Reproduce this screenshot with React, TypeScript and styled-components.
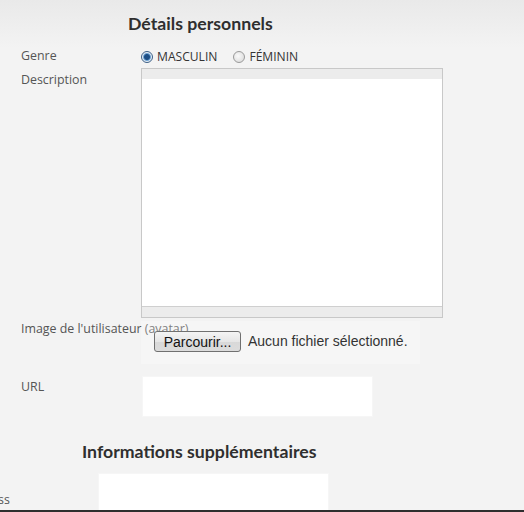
import styled, { createGlobalStyle } from 'styled-components'

const GlobalStyle = createGlobalStyle`
  html, body {
    margin: 0;
    padding: 0;
    background: #f3f3f3;
  }
  body {
    font-family: 'Open Sans', 'Liberation Sans', sans-serif;
  }
`

const Page = styled.div`
  height: 510px;
  overflow: hidden;
  background: linear-gradient(#e9e9e9 0px, #f3f3f3 48px, #f3f3f3 100%);
  border-bottom: 2px solid #2e2e2e;
`

const Section = styled.section<{ $shift?: number }>`
  margin-left: ${(p) => p.$shift ?? 0}px;
`

const Heading = styled.h2<{ $indent: number; $top: number }>`
  margin: ${(p) => p.$top}px 0 0 ${(p) => p.$indent}px;
  font-family: Lato, 'Open Sans', sans-serif;
  font-weight: 700;
  font-size: 17.7px;
  line-height: 22px;
  color: #2f2f2f;
`

const Row = styled.div<{ $top?: number }>`
  display: flex;
  align-items: flex-start;
  margin-top: ${(p) => p.$top ?? 0}px;
`

const Label = styled.label<{ $pad?: number; $top?: number; $inset?: number }>`
  flex: 0 0 auto;
  box-sizing: border-box;
  width: 141px;
  padding-left: ${(p) => p.$inset ?? 21}px;
  padding-top: ${(p) => p.$top ?? 0}px;
  margin-right: ${(p) => p.$pad ?? 0}px;
  font-size: 12.4px;
  line-height: 16px;
  color: #555;
  white-space: nowrap;
`

const Radios = styled.div`
  display: flex;
  align-items: center;
  gap: 16px;
  padding-top: 1px;
`

const RadioOption = styled.span`
  display: inline-flex;
  align-items: center;
  gap: 4px;
  font-size: 12.1px;
  line-height: 16px;
  color: #333;
`

const RadioDot = styled.span<{ $checked?: boolean }>`
  box-sizing: border-box;
  width: 12px;
  height: 12px;
  border-radius: 50%;
  border: 1px solid ${(p) => (p.$checked ? '#3c5f86' : '#9a9a9a')};
  background: ${(p) =>
    p.$checked
      ? 'radial-gradient(circle, #1d4f86 0 2.5px, #6fa3d3 3.5px, #e9f0f7 4.5px)'
      : 'radial-gradient(circle at 40% 40%, #fafafa 0, #d6d6d6 100%)'};
`

const Editor = styled.div`
  box-sizing: border-box;
  width: 302px;
  height: 250px;
  border: 1px solid #c8c8c8;
  display: flex;
  flex-direction: column;
  background: #fff;
`

const EditorBar = styled.div<{ $bottom?: boolean }>`
  height: 10px;
  background: #ececec;
  ${(p) => (p.$bottom ? 'border-top: 1px solid #cfcfcf;' : '')}
`

const EditorArea = styled.textarea`
  flex: 1;
  border: none;
  resize: none;
  outline: none;
  background: #fff;
`

const FileBox = styled.div`
  box-sizing: border-box;
  width: 279px;
  height: 43px;
  padding: 10px 0 0 13px;
  display: flex;
  align-items: flex-start;
  gap: 7px;
  background: rgba(255, 255, 255, 0.25);
  font-family: 'Liberation Sans', Arial, sans-serif;
  font-size: 14px;
  line-height: 21px;
  color: #333;
`

const Browse = styled.button`
  box-sizing: border-box;
  height: 21px;
  width: 87px;
  padding: 0;
  border: 1px solid #707070;
  border-radius: 3px;
  background: linear-gradient(#f4f4f4, #e6e6e6 50%, #d8d8d8 51%, #dcdcdc);
  font-family: 'Liberation Sans', Arial, sans-serif;
  font-size: 14px;
  color: #111;
`

const TextBox = styled.input<{ $w: number; $h: number }>`
  box-sizing: border-box;
  width: ${(p) => p.$w}px;
  height: ${(p) => p.$h}px;
  border: 1px solid #f6f6f6;
  background: #fff;
  outline: none;
`

export default function App() {
  return (
    <>
      <GlobalStyle />
      <Page>
        <Section>
          <Heading $indent={128} $top={13}>
            Détails personnels
          </Heading>
          <Row $top={13}>
            <Label>Genre</Label>
            <Radios>
              <RadioOption>
                <RadioDot $checked />
                MASCULIN
              </RadioOption>
              <RadioOption>
                <RadioDot />
                FÉMININ
              </RadioOption>
            </Radios>
          </Row>
          <Row $top={3}>
            <Label $top={4}>Description</Label>
            <Editor>
              <EditorBar />
              <EditorArea />
              <EditorBar $bottom />
            </Editor>
          </Row>
          <Row $top={3}>
            <Label>Image de l'utilisateur (avatar)</Label>
            <FileBox>
              <Browse>Parcourir...</Browse>
              <span>Aucun fichier sélectionné.</span>
            </FileBox>
          </Row>
          <Row $top={12}>
            <Label $top={3} $pad={1}>
              URL
            </Label>
            <TextBox $w={231} $h={41} />
          </Row>
        </Section>
        <Section $shift={-43}>
          <Heading $indent={125} $top={24}>
            Informations supplémentaires
          </Heading>
          <Row $top={10}>
            <Label $inset={6} $top={19}>
              Address
            </Label>
            <TextBox $w={231} $h={40} />
          </Row>
        </Section>
      </Page>
    </>
  )
}
